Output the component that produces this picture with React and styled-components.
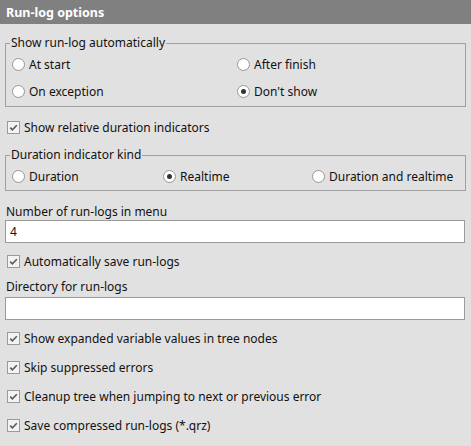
import React from "react";
import styled, { createGlobalStyle } from "styled-components";

const Global = createGlobalStyle`
  html, body {
    margin: 0;
    padding: 0;
    background: #e1e1e1;
  }
  body {
    font-family: "Noto Sans", "Open Sans", sans-serif;
    font-size: 12px;
    color: #111;
  }
`;

const Panel = styled.div`
  width: 471px;
  height: 446px;
  background: #e1e1e1;
  display: flex;
  flex-direction: column;
  overflow: hidden;
`;

const Header = styled.div`
  height: 24px;
  background: #808080;
  color: #fff;
  font-weight: bold;
  font-size: 12.5px;
  display: flex;
  align-items: center;
  padding-left: 6px;
`;

const Group = styled.fieldset`
  margin: ${(p) => p.$top}px 5px 0 5px;
  border: 1px solid #a0a0a0;
  padding: 0 4px 1px 4px;
  min-width: 0;
`;

const Legend = styled.legend`
  padding: 0 1px;
  line-height: 16px;
`;

const RadioGrid = styled.div`
  display: grid;
  grid-template-columns: ${(p) => p.$cols};
  grid-auto-rows: ${(p) => p.$row}px;
  align-items: center;
`;

const Option = styled.label`
  display: flex;
  align-items: center;
  gap: 4px;
  padding-left: ${(p) => p.$indent || 0}px;
  white-space: nowrap;
`;

const RadioDot = styled.span`
  width: 11px;
  height: 11px;
  border-radius: 50%;
  border: 1px solid #9a9a9a;
  background: radial-gradient(circle at 45% 40%, #ffffff 55%, #ececec 100%);
  display: inline-flex;
  align-items: center;
  justify-content: center;
  flex: none;

  &::after {
    content: "";
    width: 5px;
    height: 5px;
    border-radius: 50%;
    background: ${(p) => (p.$on ? "#333" : "transparent")};
  }
`;

const Box = styled.span`
  width: 11px;
  height: 11px;
  border: 1px solid #9a9a9a;
  background: #f3f3f3;
  display: inline-flex;
  align-items: center;
  justify-content: center;
  flex: none;
`;

const CheckRow = styled.label`
  display: flex;
  align-items: center;
  gap: 4px;
  height: 20px;
  margin: ${(p) => p.$top}px 0 0 7px;
`;

const FieldLabel = styled.div`
  line-height: 16px;
  margin: ${(p) => p.$top}px 0 0 6px;
`;

const TextBox = styled.div`
  height: 21px;
  margin: ${(p) => p.$top}px 6px 0 5px;
  border: 1px solid #9a9a9a;
  background: #fff;
  display: flex;
  align-items: center;
  padding-left: 4px;
`;

const Radio = ({ label, on }) => (
  <Option $indent={2}>
    <RadioDot $on={on} />
    {label}
  </Option>
);

const Check = ({ label, top }) => (
  <CheckRow $top={top}>
    <Box>
      <svg width="9" height="9" viewBox="0 0 9 9">
        <path d="M1.2 4.6 L3.4 6.8 L7.8 2.2" fill="none" stroke="#5a5a5a" strokeWidth="1.6" />
      </svg>
    </Box>
    {label}
  </CheckRow>
);

export default function App() {
  return (
    <Panel>
      <Global />
      <Header>Run-log options</Header>

      <Group $top={11}>
        <Legend>Show run-log automatically</Legend>
        <RadioGrid $cols="225px 1fr" $row={27}>
          <Radio label="At start" />
          <Radio label="After finish" />
          <Radio label="On exception" />
          <Radio label="Don't show" on />
        </RadioGrid>
      </Group>

      <Check label="Show relative duration indicators" top={10} />

      <Group $top={10}>
        <Legend>Duration indicator kind</Legend>
        <RadioGrid $cols="151px 149px 1fr" $row={26}>
          <Radio label="Duration" />
          <Radio label="Realtime" on />
          <Radio label="Duration and realtime" />
        </RadioGrid>
      </Group>

      <FieldLabel $top={13}>Number of run-logs in menu</FieldLabel>
      <TextBox $top={0}>4</TextBox>

      <Check label="Automatically save run-logs" top={8} />

      <FieldLabel $top={8}>Directory for run-logs</FieldLabel>
      <TextBox $top={2} />

      <Check label="Show expanded variable values in tree nodes" top={8} />
      <Check label="Skip suppressed errors" top={9} />
      <Check label="Cleanup tree when jumping to next or previous error" top={9} />
      <Check label="Save compressed run-logs (*.qrz)" top={9} />
    </Panel>
  );
}
